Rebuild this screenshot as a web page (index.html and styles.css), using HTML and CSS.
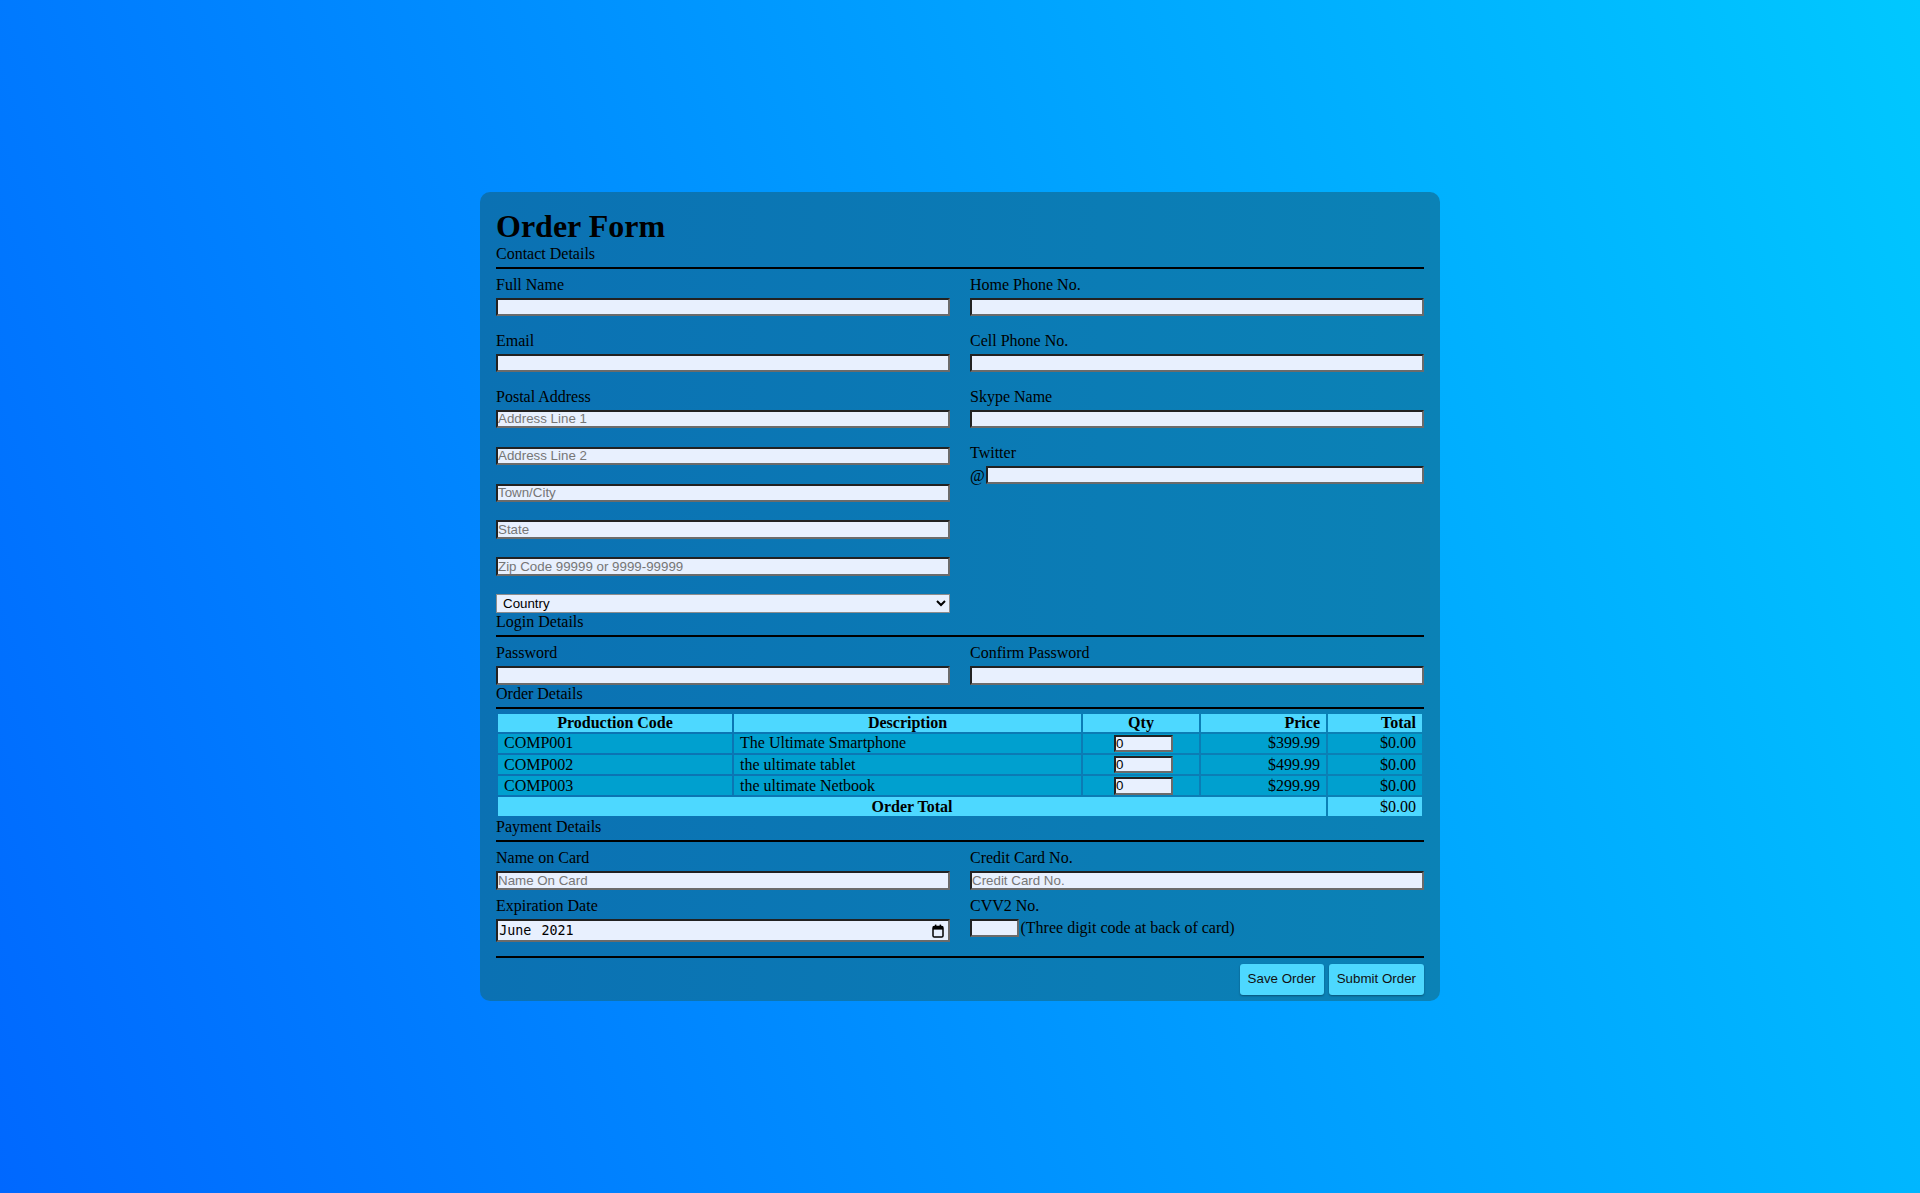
FILE: index.html
```html
<!DOCTYPE html>
<html lang="en">
<head>
<meta charset="utf-8">
<title>Order Form</title>
<link rel="stylesheet" href="styles.css">
</head>
<body>
<form class="card">
  <h1 class="form-title">Order Form</h1>

  <div class="section-title">Contact Details</div>
  <div class="grid">
    <div class="col">
      <div class="field">
        <label class="label">Full Name</label>
        <input class="text" type="text">
      </div>
      <div class="field">
        <label class="label">Email</label>
        <input class="text" type="text">
      </div>
      <div class="field field-last">
        <label class="label">Postal Address</label>
        <input class="text" type="text" placeholder="Address Line 1">
        <input class="text stack" type="text" placeholder="Address Line 2">
        <input class="text stack" type="text" placeholder="Town/City">
        <input class="text stack" type="text" placeholder="State">
        <input class="text stack" type="text" placeholder="Zip Code 99999 or 9999-99999">
        <select class="select stack"><option>Country</option></select>
      </div>
    </div>
    <div class="col">
      <div class="field">
        <label class="label">Home Phone No.</label>
        <input class="text" type="text">
      </div>
      <div class="field">
        <label class="label">Cell Phone No.</label>
        <input class="text" type="text">
      </div>
      <div class="field">
        <label class="label">Skype Name</label>
        <input class="text" type="text">
      </div>
      <div class="field field-last">
        <label class="label">Twitter</label>
        <div class="inline-row">
          <span class="at">@</span><input class="text grow" type="text">
        </div>
      </div>
    </div>
  </div>

  <div class="section-title">Login Details</div>
  <div class="grid">
    <div class="field field-last">
      <label class="label">Password</label>
      <input class="text" type="password">
    </div>
    <div class="field field-last">
      <label class="label">Confirm Password</label>
      <input class="text" type="password">
    </div>
  </div>

  <div class="section-title">Order Details</div>
  <table class="order-table">
    <colgroup>
      <col class="c-code"><col class="c-desc"><col class="c-qty"><col class="c-price"><col class="c-total">
    </colgroup>
    <thead>
      <tr>
        <th class="center">Production Code</th>
        <th class="center">Description</th>
        <th class="center">Qty</th>
        <th class="right">Price</th>
        <th class="right">Total</th>
      </tr>
    </thead>
    <tbody>
      <tr>
        <td>COMP001</td>
        <td>The Ultimate Smartphone</td>
        <td class="qty-cell"><input class="text qty" type="text" value="0"></td>
        <td class="right">$399.99</td>
        <td class="right">$0.00</td>
      </tr>
      <tr>
        <td>COMP002</td>
        <td>the ultimate tablet</td>
        <td class="qty-cell"><input class="text qty" type="text" value="0"></td>
        <td class="right">$499.99</td>
        <td class="right">$0.00</td>
      </tr>
      <tr>
        <td>COMP003</td>
        <td>the ultimate Netbook</td>
        <td class="qty-cell"><input class="text qty" type="text" value="0"></td>
        <td class="right">$299.99</td>
        <td class="right">$0.00</td>
      </tr>
      <tr class="total-row">
        <td class="center bold" colspan="4">Order Total</td>
        <td class="right">$0.00</td>
      </tr>
    </tbody>
  </table>

  <div class="section-title">Payment Details</div>
  <div class="grid grid-pay">
    <div class="field field-last">
      <label class="label">Name on Card</label>
      <input class="text" type="text" placeholder="Name On Card">
    </div>
    <div class="field field-last">
      <label class="label">Credit Card No.</label>
      <input class="text" type="text" placeholder="Credit Card No.">
    </div>
    <div class="field field-last">
      <label class="label">Expiration Date</label>
      <div class="date-field">
        <span class="date-value"><span class="date-part">June</span> <span class="date-part">2021</span></span>
        <svg class="cal-icon" width="12" height="14" viewBox="0 0 12 14" aria-hidden="true">
          <rect x="1" y="2.6" width="10" height="10.4" rx="1.3" fill="none" stroke="#000" stroke-width="1.5"/>
          <rect x="1" y="2.6" width="10" height="3" fill="#000"/>
          <rect x="2.9" y="0.6" width="1.5" height="3" fill="#000"/>
          <rect x="7.6" y="0.6" width="1.5" height="3" fill="#000"/>
        </svg>
      </div>
    </div>
    <div class="field field-last">
      <label class="label">CVV2 No.</label>
      <div class="inline-row">
        <input class="text cvv" type="text"><span class="hint">(Three digit code at back of card)</span>
      </div>
    </div>
  </div>

  <div class="actions">
    <button type="button" class="btn">Save Order</button>
    <button type="button" class="btn">Submit Order</button>
  </div>
</form>
</body>
</html>
```
FILE: styles.css
```css
* {
  box-sizing: border-box;
}

html {
  height: 100%;
  margin: 0;
}

body {
  margin: 0;
  min-height: 100%;
  padding-top: 192px;
  background: linear-gradient(70deg, #0068ff 0%, #00c8ff 100%);
  font-family: "Liberation Serif", "Times New Roman", serif;
  font-size: 16px;
  color: #000;
}

.card {
  display: block;
  width: 960px;
  margin: 0 auto;
  padding: 17px 16px 6.7px;
  border-radius: 10px;
  background: linear-gradient(to right, #0b71b3, #0b82b6);
}

.form-title {
  margin: 0;
  font-size: 32px;
  line-height: 35.5px;
  font-weight: bold;
}

.section-title {
  line-height: 18px;
  padding-bottom: 4px;
  border-bottom: 2px solid #000;
}

.grid {
  display: grid;
  grid-template-columns: 1fr 1fr;
  column-gap: 20px;
  margin-top: 7.5px;
}

.grid-pay {
  row-gap: 7.4px;
}

.col {
  display: flex;
  flex-direction: column;
}

.field {
  display: flex;
  flex-direction: column;
  margin-bottom: 15.5px;
}

.field-last {
  margin-bottom: 0;
}

.label {
  display: block;
  line-height: 18px;
}

.text {
  display: block;
  width: 100%;
  height: 18.4px;
  margin: 4px 0 0;
  padding: 0;
  border: 2px solid;
  border-color: #222 #6b6b6b #6b6b6b #222;
  border-radius: 0;
  background: #e8f0fe;
  font-family: "Liberation Sans", Arial, sans-serif;
  font-size: 13.33px;
  color: #000;
  outline: none;
}

.text::placeholder {
  color: #767676;
}

.stack {
  margin-top: 18.5px;
}

.select {
  display: block;
  width: 100%;
  height: 18.4px;
  border: 1px solid #8d8d8d;
  border-radius: 0;
  background-color: #e8f0fe;
  font-family: "Liberation Sans", Arial, sans-serif;
  font-size: 13.33px;
  color: #000;
  padding: 0 0 0 2px;
}

.inline-row {
  display: flex;
  align-items: center;
  margin-top: 4px;
}

.inline-row .text {
  margin-top: 0;
}

.at {
  line-height: 18px;
  margin-right: 1px;
  position: relative;
  top: 1px;
}

.grow {
  flex: 1;
  width: auto;
}

.cvv {
  width: 49px;
  flex: none;
}

.hint {
  margin-left: 1.5px;
  line-height: 18px;
}

.date-field {
  display: flex;
  align-items: center;
  justify-content: space-between;
  height: 23.4px;
  margin-top: 4px;
  padding: 0 4.5px 0 0.3px;
  border: 2px solid;
  border-color: #222 #6b6b6b #6b6b6b #222;
  background: #e8f0fe;
  font-family: "DejaVu Sans Mono", "Liberation Mono", monospace;
  font-size: 13.33px;
  color: #000;
  white-space: pre;
}

.date-part {
  padding: 0 1px;
}

.cal-icon {
  display: block;
  flex: none;
}

/* Table */
.order-table {
  width: 100%;
  margin-top: 3.6px;
  border-spacing: 2px;
  table-layout: fixed;
  font-size: 16px;
}

.c-code { width: 234px; }
.c-desc { width: 347px; }
.c-qty { width: 116px; }
.c-price { width: 125px; }
.c-total { width: 94px; }

.order-table th {
  height: 17.7px;
  padding: 0 6px;
  line-height: 17px;
  background: #4dd8ff;
  font-weight: bold;
}

.order-table td {
  height: 19.2px;
  padding: 0 6px;
  line-height: 18px;
  background: #00a0cf;
  text-align: left;
}

.order-table .total-row td {
  height: 18.3px;
  background: #4dd8ff;
}

.order-table .center { text-align: center; }
.order-table .right { text-align: right; }
.order-table .bold { font-weight: bold; }

.order-table td.qty-cell {
  padding: 0 0 0 31px;
}

.qty {
  width: 59px;
  height: 17.7px;
  margin: 0;
}

/* Actions */
.actions {
  display: flex;
  justify-content: flex-end;
  gap: 5px;
  margin-top: 13.3px;
  padding-top: 6.3px;
  border-top: 2px solid #000;
}

.btn {
  padding: 8px;
  border: 0;
  border-radius: 3px;
  background: #4dd8ff;
  color: #111;
  font-family: "Liberation Sans", Arial, sans-serif;
  font-size: 13.33px;
  line-height: 14.7px;
  box-shadow: 0 1px 2px rgba(0, 0, 0, 0.35);
  cursor: pointer;
}
```
